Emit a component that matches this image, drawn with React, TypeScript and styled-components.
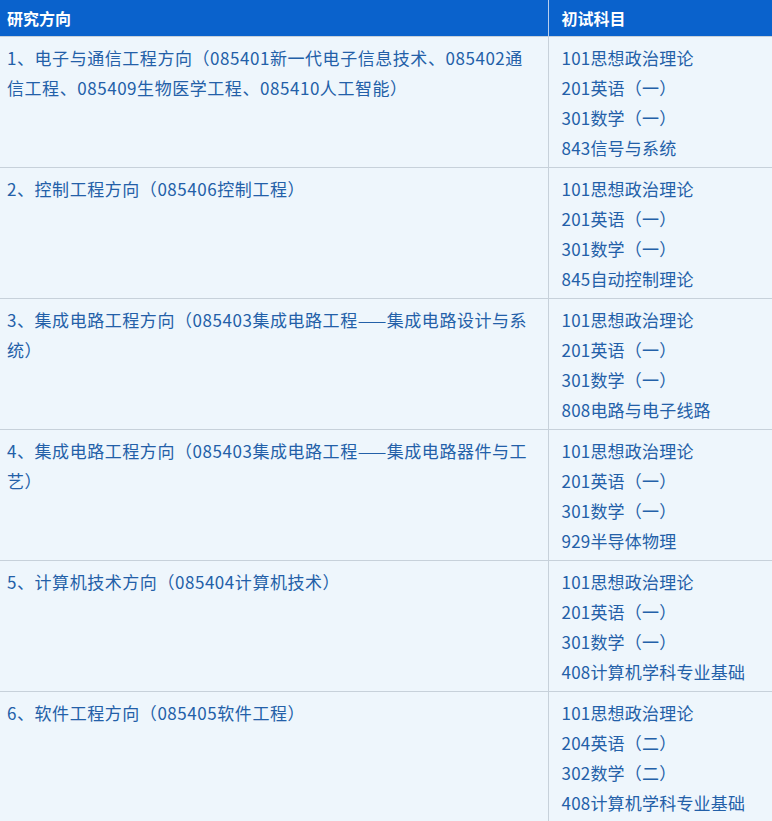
import styled, { createGlobalStyle } from 'styled-components'

const GlobalStyle = createGlobalStyle`
  html, body {
    margin: 0;
    padding: 0;
    background: #eef6fc;
  }
`

const Table = styled.table`
  width: 772px;
  border-collapse: collapse;
  table-layout: fixed;
  font-family: "Noto Sans CJK SC", "Noto Sans", sans-serif;
  background: #eef6fc;
`

const HeadCell = styled.th<{ $first?: boolean }>`
  height: 36px;
  padding: 0 0 0 ${(p) => (p.$first ? '7px' : '13px')};
  width: ${(p) => (p.$first ? '548px' : 'auto')};
  background: #0a62cc;
  color: #ffffff;
  font-size: 16px;
  font-weight: 700;
  text-align: left;
  border-right: ${(p) => (p.$first ? '1px solid #b9cfee' : 'none')};
  box-sizing: border-box;
`

const Row = styled.tr`
  border-top: 1px solid #c7d1da;
`

const Cell = styled.td<{ $first?: boolean }>`
  vertical-align: top;
  padding: 6px ${(p) => (p.$first ? '14px 4px 7px' : '0 4px 13px')};
  color: #2360a8;
  font-size: 17px;
  line-height: 30px;
  letter-spacing: ${(p) => (p.$first ? '0.55px' : '0.2px')};
  border-right: ${(p) => (p.$first ? '1px solid #c7d1da' : 'none')};
  word-break: break-all;
`

const Subject = styled.div`
  white-space: nowrap;
`

const rows = [
  {
    dir: '1、电子与通信工程方向（085401新一代电子信息技术、085402通信工程、085409生物医学工程、085410人工智能）',
    subs: ['101思想政治理论', '201英语（一）', '301数学（一）', '843信号与系统'],
  },
  {
    dir: '2、控制工程方向（085406控制工程）',
    subs: ['101思想政治理论', '201英语（一）', '301数学（一）', '845自动控制理论'],
  },
  {
    dir: '3、集成电路工程方向（085403集成电路工程——集成电路设计与系统）',
    subs: ['101思想政治理论', '201英语（一）', '301数学（一）', '808电路与电子线路'],
  },
  {
    dir: '4、集成电路工程方向（085403集成电路工程——集成电路器件与工艺）',
    subs: ['101思想政治理论', '201英语（一）', '301数学（一）', '929半导体物理'],
  },
  {
    dir: '5、计算机技术方向（085404计算机技术）',
    subs: ['101思想政治理论', '201英语（一）', '301数学（一）', '408计算机学科专业基础'],
  },
  {
    dir: '6、软件工程方向（085405软件工程）',
    subs: ['101思想政治理论', '204英语（二）', '302数学（二）', '408计算机学科专业基础'],
  },
]

export default function App() {
  return (
    <>
      <GlobalStyle />
      <Table>
        <thead>
          <tr>
            <HeadCell $first>研究方向</HeadCell>
            <HeadCell>初试科目</HeadCell>
          </tr>
        </thead>
        <tbody>
          {rows.map((r, i) => (
            <Row key={i}>
              <Cell $first>{r.dir}</Cell>
              <Cell>
                {r.subs.map((s) => (
                  <Subject key={s}>{s}</Subject>
                ))}
              </Cell>
            </Row>
          ))}
        </tbody>
      </Table>
    </>
  )
}
